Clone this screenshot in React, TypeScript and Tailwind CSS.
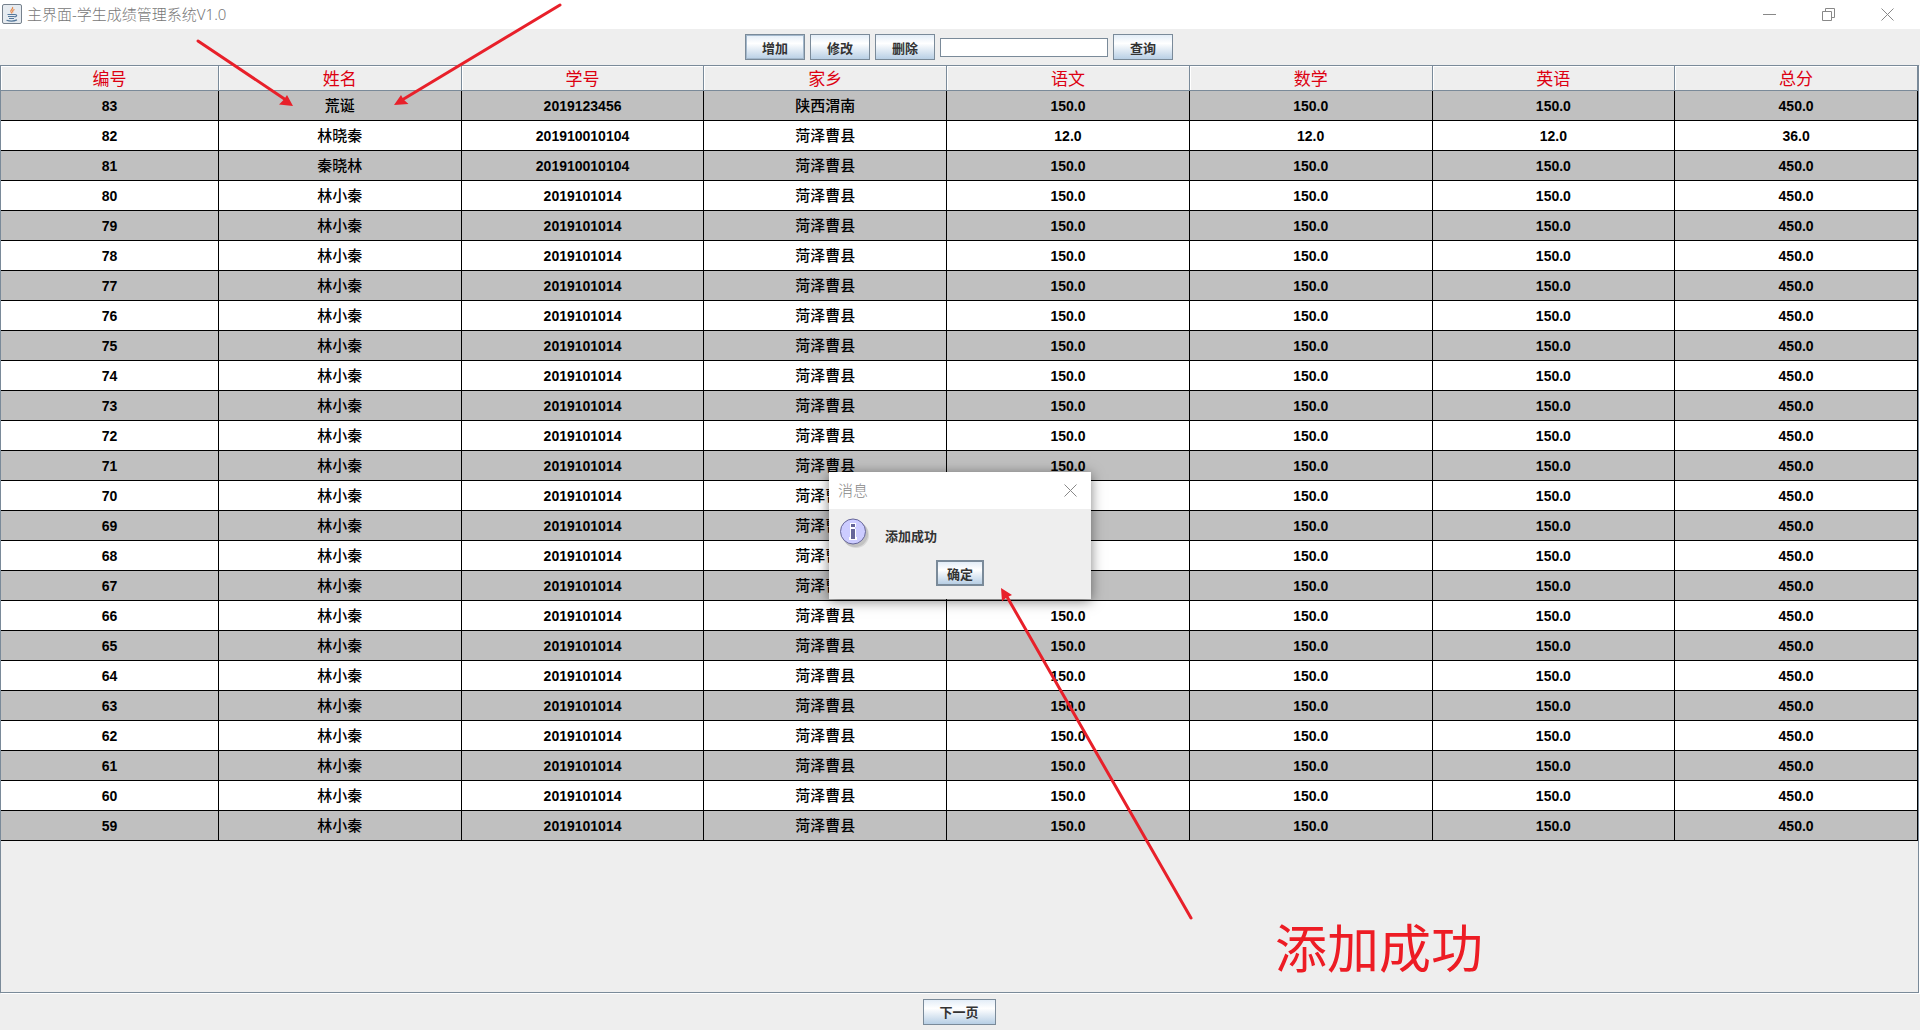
import React, { useState } from 'react';

interface Student {
  id: number;
  name: string;
  no: string;
  city: string;
  score: string;
  total: string;
}

const headers = ['编号', '姓名', '学号', '家乡', '语文', '数学', '英语', '总分'];

const students: Student[] = [
  { id: 83, name: '荒诞', no: '2019123456', city: '陕西渭南', score: '150.0', total: '450.0' },
  { id: 82, name: '林晓秦', no: '201910010104', city: '菏泽曹县', score: '12.0', total: '36.0' },
  { id: 81, name: '秦晓林', no: '201910010104', city: '菏泽曹县', score: '150.0', total: '450.0' },
  ...Array.from({ length: 22 }, (_, i) => ({
    id: 80 - i,
    name: '林小秦',
    no: '2019101014',
    city: '菏泽曹县',
    score: '150.0',
    total: '450.0'
  }))
];

interface SwingButtonProps {
  label: string;
  className?: string;
  focused?: boolean;
  onClick?: () => void;
}

const SwingButton: React.FC<SwingButtonProps> = ({ label, className = '', focused = false, onClick }) => (
  <button
    type="button"
    onClick={onClick}
    className={`h-[26px] border border-[#7a8a99] bg-linear-to-b from-[#e3edf7] via-white via-35% to-[#b8cfe5] pt-0.5 text-[13px] leading-none font-bold text-[#333333] ${
      focused ? 'shadow-[inset_0_0_0_1px_#a3b8cc]' : ''
    } ${className}`}
  >
    {label}
  </button>
);

const JavaIcon: React.FC = () => (
  <svg width="20" height="20" viewBox="0 0 20 20" fill="none">
    <rect x="0.5" y="0.5" width="19" height="19" rx="1.5" fill="#e6ebf0" stroke="#76818d" />
    <path d="M10.500 3c1.500 2-3 3-1.500 5l1 1.500M12.500 5.500c-2 1-2.300 1.600-1.500 3" stroke="#e58a4e" strokeWidth="1.200" />
    <path d="M5.500 10.500h7.500M6 12.500h6.500M7 14.500h5M13 10.500c2.500 0 2 2.300-.5 2.500M4.500 16.200c3 1 8 .8 10.500-.3" stroke="#55789b" strokeWidth="1.200" />
  </svg>
);

const InfoIcon: React.FC = () => (
  <svg width="32" height="32" viewBox="0 0 32 32">
    <circle cx="16" cy="16" r="13" fill="#999999" opacity="0.35" />
    <circle cx="17" cy="17" r="13" fill="#999999" opacity="0.25" />
    <circle cx="14" cy="13.500" r="12.500" fill="#ccccff" stroke="#666699" />
    <path d="M11 5h6v4h-1v2h1v8h1v3h-8v-3h1z" fill="#ffffff" />
    <path d="M12 6h4v3h-4zM12 11h4v10h-4z" fill="#666699" />
  </svg>
);

// Red pointers drawn over the window
const Arrows: React.FC = () => (
  <svg className="pointer-events-none absolute top-0 left-0" width="1200" height="930" viewBox="0 0 1200 930">
    <g stroke="#e8202a" strokeWidth="3" strokeLinecap="round">
      <path d="M198 41L286 100M560 5L402 100M1191 918L1006 595" />
    </g>
    <g fill="#e8202a">
      <path d="M293 106L279 104.500L284 99.500L287 95Z" />
      <path d="M394 105L401 95L403.500 99.500L408.500 104Z" />
      <path d="M1001 588L1012 595L1006.500 597.500L1002 601.500Z" />
    </g>
  </svg>
);

const App: React.FC = () => {
  const [keyword, setKeyword] = useState('');
  const [showMessage, setShowMessage] = useState(true);

  return (
    <div className="relative flex min-h-screen flex-col overflow-hidden bg-[#eeeeee] font-['Liberation_Sans','Noto_Sans_CJK_SC',sans-serif]">
      {/* Title bar */}
      <header className="flex h-[29px] items-center justify-between bg-white pr-[26px] pb-px pl-0.5">
        <div className="flex items-center gap-[5px]">
          <JavaIcon />
          <h1 className="font-['Noto_Sans','Noto_Sans_CJK_SC',sans-serif] text-[15px] leading-none font-light text-[#777777]">主界面-学生成绩管理系统V1.0</h1>
        </div>
        <div className="flex gap-[46px] text-[#888888]">
          <button type="button" aria-label="最小化">
            <svg width="13" height="13" viewBox="0 0 13 13" stroke="currentColor"><path d="M0 6.500h13" /></svg>
          </button>
          <button type="button" aria-label="还原">
            <svg width="13" height="13" viewBox="0 0 13 13" fill="none" stroke="currentColor"><path d="M0.500 3.500h9v9h-9zM3.500 3.500v-3h9v9h-3" /></svg>
          </button>
          <button type="button" aria-label="关闭">
            <svg width="13" height="13" viewBox="0 0 13 13" stroke="currentColor"><path d="M0.500 0.500l12 12M12.500 0.500l-12 12" /></svg>
          </button>
        </div>
      </header>

      {/* Toolbar */}
      <div className="flex h-9 items-center justify-center gap-[5px] pr-0.5">
        <SwingButton label="增加" className="w-[60px]" focused />
        <SwingButton label="修改" className="w-[60px]" />
        <SwingButton label="删除" className="w-[60px]" />
        <input
          type="text"
          aria-label="查询"
          value={keyword}
          onChange={(e) => setKeyword(e.target.value)}
          className="h-[19px] w-[168px] border border-[#7a8a99] bg-white px-1 text-xs outline-none"
        />
        <SwingButton label="查询" className="w-[60px]" />
      </div>

      {/* Student table */}
      <main className="mr-px flex-1 border border-[#7a8a99] shadow-[1px_1px_0_#ffffff]">
        <table className="w-full table-fixed border-separate border-spacing-0 text-center">
          <thead>
            <tr className="h-[25px]">
              {headers.map((header, index) => (
                <th
                  key={header}
                  className={`border-r border-b border-[#7a8a99] px-0 pt-1 pb-0 text-[17px] leading-5 font-normal text-[#dd0011] shadow-[inset_1px_1px_0_#ffffff] ${
                    index === 0 ? 'w-[218px]' : ''
                  }`}
                >
                  {header}
                </th>
              ))}
            </tr>
          </thead>
          <tbody>
            {students.map((s) => (
              <tr key={s.id} className="h-[30px] odd:bg-[#c0c0c0] even:bg-white">
                {[s.id, s.name, s.no, s.city, s.score, s.score, s.score, s.total].map((value, index) => (
                  <td
                    key={index}
                    className={`border-r border-b border-black p-0 leading-5 text-black ${
                      index === 1 || index === 3 ? 'text-[15px] font-medium' : 'text-sm font-bold'
                    }`}
                  >
                    {value}
                  </td>
                ))}
              </tr>
            ))}
          </tbody>
        </table>
      </main>

      {/* Pager */}
      <footer className="flex h-[37px] items-center justify-center pr-0.5">
        <SwingButton label="下一页" className="w-[73px]" />
      </footer>

      {/* Message dialog */}
      {showMessage && (
        <div
          role="dialog"
          aria-label="消息"
          className="absolute top-[472px] left-[829px] flex h-[127px] w-[262px] flex-col bg-[#eeeeee] shadow-[0_2px_12px_rgba(0,0,0,0.5)]"
        >
          <div className="flex h-[37px] items-center justify-between bg-white pr-3.5 pb-px pl-[9px] text-[#888888]">
            <span className="text-[15px] leading-none font-light">消息</span>
            <button type="button" aria-label="关闭" onClick={() => setShowMessage(false)}>
              <svg width="13" height="13" viewBox="0 0 13 13" stroke="currentColor"><path d="M0.500 0.500l12 12M12.500 0.500l-12 12" /></svg>
            </button>
          </div>
          <div className="flex items-center gap-3.5 px-2.5 pt-[9px]">
            <InfoIcon />
            <p className="pt-1 text-[13px] leading-none font-bold text-[#333333]">添加成功</p>
          </div>
          <div className="flex justify-center pt-2.5">
            <SwingButton label="确定" className="w-12 border-2" onClick={() => setShowMessage(false)} />
          </div>
        </div>
      )}

      <Arrows />
      <p className="pointer-events-none absolute top-[924px] left-[1275px] text-[52px] leading-[52px] text-[#ed1c24]">添加成功</p>
    </div>
  );
};

export default App;
